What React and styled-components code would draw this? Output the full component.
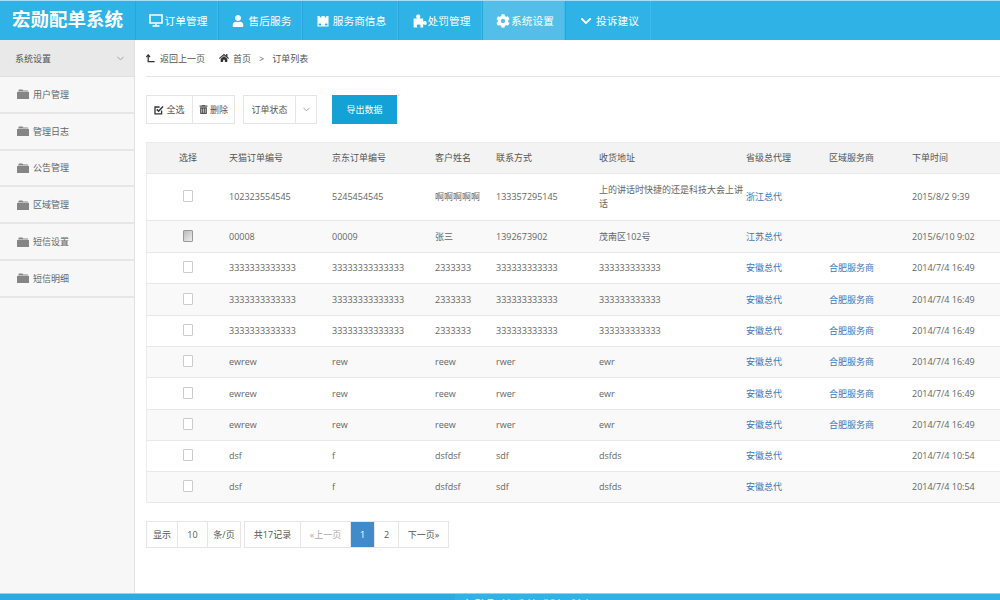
import React from 'react';
import styled, { createGlobalStyle } from 'styled-components';
import { FaUser, FaCog, FaChevronDown, FaHome, FaTrashAlt } from 'react-icons/fa';
import { FiChevronDown } from 'react-icons/fi';

const FONT = `"Open Sans", "Noto Sans CJK SC", sans-serif`;

const Global = createGlobalStyle`
  html, body { margin: 0; padding: 0; height: 100%; overflow: hidden; background: #fff; }
  body { font-family: ${FONT}; font-size: 9px; color: #666; }
  #root { height: 100%; }
  * { box-sizing: border-box; }
`;

const Page = styled.div`
  display: flex; flex-direction: column; height: 600px; overflow: hidden;
`;
const Header = styled.header`
  display: flex; height: 40px; flex: none; background: #2fb3e6; border-top: 1px solid #a9dff4;
`;
const Logo = styled.div`
  width: 135px; display: flex; align-items: center; justify-content: center;
  font-size: 18.5px; font-weight: 700; color: #fff; line-height: 1; padding-bottom: 2px;
`;
const Nav = styled.nav`display: flex;`;
const NavItem = styled.a`
  display: flex; align-items: center; justify-content: center;
  gap: ${p => p.$gap}px;
  padding-left: 3px;
  width: ${p => p.$w}px; font-size: 10.7px; color: #fff;
  border-left: 1px solid #29a5d8;
  border-right: 1px solid #3dbbea;
  background: ${p => (p.$active ? '#53bfe9' : 'transparent')};
  svg { flex: none; }
`;
const Body = styled.div`flex: 1; display: flex; min-height: 0;`;
const Sidebar = styled.aside`
  width: 135px; flex: none; background: #f7f7f7; border-right: 1px solid #e3e3e3;
`;
const SideHead = styled.div`
  height: 37px; background: #e9e9e9; display: flex; align-items: center; justify-content: space-between;
  padding: 0 8px 0 15px; font-size: 9px; color: #555; border-bottom: 1px solid #e0e0e0;
`;
const SideItem = styled.div`
  height: 36.8px; display: flex; align-items: center; gap: 4px; padding-left: 17px;
  font-size: 9px; color: #666; border-bottom: 2px solid #e6e6e6; background: #f7f7f7;
`;
const Main = styled.main`flex: 1; min-width: 0; padding-left: 11px;`;
const Crumbs = styled.div`
  height: 37px; border-bottom: 1px solid #e5e5e5; display: flex; align-items: center; font-size: 9px; color: #555;
`;
const Crumb = styled.span`
  display: inline-flex; align-items: center; gap: ${p => p.$gap || 0}px; margin-right: ${p => p.$mr || 0}px;
`;
const Sep = styled.span`margin: 0 8px; color: #666; font-size: 9px;`;
const Toolbar = styled.div`
  display: flex; align-items: stretch; height: 29px; margin-top: 18px;
`;
const BtnGroup = styled.div`
  display: flex; margin-right: ${p => p.$mr || 0}px; border: 1px solid #e5e5e5;
`;
const ToolBtn = styled.div`
  display: flex; align-items: center; justify-content: center; gap: 2px; width: ${p => p.$w}px;
  font-size: 9px; color: #555; background: #fff;
  & + & { border-left: 1px solid #e5e5e5; }
`;
const Export = styled.div`
  width: 65px; display: flex; align-items: center; justify-content: center;
  background: #13a1d6; color: #fff; font-size: 9px;
`;
const Table = styled.table`
  margin-top: 18px; width: 854px; table-layout: fixed; border-collapse: separate; border-spacing: 0;
  font-size: 9px; color: #666;
  border-top: 1px solid #ececec; border-left: 1px solid #ececec;
`;
const Th = styled.th`
  height: 31px; background: #f3f3f3; font-weight: 400; text-align: ${p => (p.$center ? 'center' : 'left')};
  padding: 0 0 1px; color: #555; border-bottom: 1px solid #e8e8e8;
`;
const Tr = styled.tr`background: ${p => (p.$alt ? '#f9f9f9' : '#fff')};`;
const Td = styled.td`
  height: ${p => p.$h}px; padding: 0; text-align: ${p => (p.$center ? 'center' : 'left')};
  border-bottom: 1px solid #e8e8e8; line-height: 14px; vertical-align: middle;
`;
const Check = styled.span`
  display: inline-block; width: 10px; height: 12px; vertical-align: middle; margin-bottom: 2px;
  border: 1px solid #ccc; border-radius: 1px;
  background: ${p => (p.$on ? 'linear-gradient(135deg,#bbb,#eee)' : '#fff')};
  border-color: ${p => (p.$on ? '#999' : '#ccc')};
`;
const Link = styled.a`color: #3d78bd;`;
const Pager = styled.div`display: flex; height: 27px; margin-top: 18px;`;
const PageGroup = styled.div`display: flex; border: 1px solid #e6e6e6; margin-right: ${p => p.$mr || 0}px;`;
const PageCell = styled.div`
  width: ${p => p.$w}px; display: flex; align-items: center; justify-content: center;
  font-size: 9px; color: ${p => (p.$active ? '#fff' : p.$muted ? '#aaa' : '#555')};
  background: ${p => (p.$active ? '#428bca' : '#fff')};
  & + & { border-left: 1px solid #e6e6e6; }
`;
const Footer = styled.footer`
  height: 7px; flex: none; display: flex; background: #2fb3e6; border-top: 1px solid #8ed4f0; overflow: hidden;
`;
const FootLeft = styled.div`width: 455px; flex: none; background: #2caae2;`;
const FootText = styled.div`color: #e8f6fc; font-size: 12px; line-height: 1; padding: 6px 0 0 6px; letter-spacing: 1px; white-space: nowrap;`;

const Folder = () => (
  <svg width="12" height="10" viewBox="0 0 12 10" fill="#858585">
    <path d="M1 2.4 2 .6h3.4l.8 1h4.6l.6.8z" />
    <path d="M0 3h12v7H0z" />
  </svg>
);
const Back = () => (
  <svg width="9" height="9" viewBox="0 0 9 9" fill="none" stroke="#333" strokeWidth="1.3">
    <path d="M2.2 1v6.6H8.6" />
    <path d="M.4 3 2.2 .9 4 3" />
  </svg>
);
const Castle = () => (
  <svg width="12" height="12" viewBox="0 0 12 12" fill="#fff">
    <path fillRule="evenodd" d="M.5 1h2.2v1.6h1.6V1h3.4v1.6h1.6V1h2.2v10.5H.5zM2.4 8.6a1 1 0 0 0 0 2h.8a1 1 0 0 0 0-2zM8.8 8.6a1 1 0 0 0 0 2h.8a1 1 0 0 0 0-2z" />
  </svg>
);
const Monitor = () => (
  <svg width="14" height="13" viewBox="0 0 14 13" fill="none" stroke="#fff">
    <path strokeWidth="1.6" d="M1 1h12v8H1z" />
    <path strokeWidth="1.4" d="M7 9.5v2M3.5 12h7" />
  </svg>
);
const Puzzle = () => (
  <svg width="14" height="14" viewBox="0 0 14 14" fill="#fff">
    <path d="M.6 4.4h3c.5-.7-.5-1.1-.5-2.2C3.1 1 4 .4 5.2.4s2.1.6 2.1 1.8c0 1.1-1 1.5-.5 2.2h3.4v3c.7.5 1.1-.5 2-.5.9 0 1.5.9 1.5 2s-.6 2-1.5 2c-.9 0-1.3-1-2-.5v3.2H7.2c-.5-.7.5-1 .5-1.8 0-.8-1-1.4-2.1-1.4s-2 .6-2 1.4c0 .8 1 1.1.5 1.8H.6z" />
  </svg>
);
const CheckEdit = () => (
  <svg width="10" height="10" viewBox="0 0 10 10" fill="none" stroke="#333">
    <path strokeWidth="1.3" d="M7.6 5.6v3.2H1V2h4.6" />
    <path strokeWidth="1.5" d="M2.8 4.4 4.6 6.2 9 1.4" />
  </svg>
);

const nav = [
  { t: '订单管理', w: 83, g: 2, i: <Monitor /> },
  { t: '售后服务', w: 84, g: 5, i: <FaUser size={12} /> },
  { t: '服务商信息', w: 96, g: 4, i: <Castle /> },
  { t: '处罚管理', w: 84, g: 1, i: <Puzzle /> },
  { t: '系统设置', w: 83, g: 1, i: <FaCog size={14} />, active: true },
  { t: '投诉建议', w: 86, g: 4, i: <FaChevronDown size={12} /> },
];
const side = ['用户管理', '管理日志', '公告管理', '区域管理', '短信设置', '短信明细'];
const widths = [82, 103, 103, 61, 103, 147, 83, 83, 88];
const heads = ['天猫订单编号', '京东订单编号', '客户姓名', '联系方式', '收货地址', '省级总代理', '区域服务商', '下单时间'];

const n3 = ['3333333333333', '33333333333333', '2333333', '333333333333', '333333333333', '安徽总代', '合肥服务商', '2014/7/4 16:49'];
const e = ['ewrew', 'rew', 'reew', 'rwer', 'ewr', '安徽总代', '合肥服务商', '2014/7/4 16:49'];
const d = ['dsf', 'f', 'dsfdsf', 'sdf', 'dsfds', '安徽总代', '', '2014/7/4 10:54'];
const rows = [
  { c: ['102323554545', '5245454545', '啊啊啊啊啊', '133357295145', '上的讲话时快捷的还是科技大会上讲话', '浙江总代', '', '2015/8/2 9:39'], h: 47 },
  { c: ['00008', '00009', '张三', '1392673902', '茂南区102号', '江苏总代', '', '2015/6/10 9:02'], h: 32, on: true, alt: true },
  { c: n3, h: 31 }, { c: n3, h: 32, alt: true }, { c: n3, h: 31 },
  { c: e, h: 31, alt: true }, { c: e, h: 32 }, { c: e, h: 31, alt: true },
  { c: d, h: 31 }, { c: d, h: 31, alt: true },
];

export default function App() {
  return (
    <Page>
      <Global />
      <Header>
        <Logo>宏勋配单系统</Logo>
        <Nav>
          {nav.map(n => (
            <NavItem key={n.t} $w={n.w} $gap={n.g} $active={n.active}>{n.i}{n.t}</NavItem>
          ))}
        </Nav>
      </Header>
      <Body>
        <Sidebar>
          <SideHead>系统设置<FiChevronDown size={11} color="#999" /></SideHead>
          {side.map(s => <SideItem key={s}><Folder />{s}</SideItem>)}
        </Sidebar>
        <Main>
          <Crumbs>
            <Crumb $gap={5} $mr={14}><Back />返回上一页</Crumb>
            <Crumb $gap={4}><FaHome size={10} color="#333" />首页</Crumb>
            <Sep>&gt;</Sep>
            <Crumb>订单列表</Crumb>
          </Crumbs>
          <Toolbar>
            <BtnGroup $mr={8}>
              <ToolBtn $w={45}><CheckEdit />全选</ToolBtn>
              <ToolBtn $w={42}><FaTrashAlt size={9} color="#555" />删除</ToolBtn>
            </BtnGroup>
            <BtnGroup $mr={15}>
              <ToolBtn $w={51}>订单状态</ToolBtn>
              <ToolBtn $w={21}><FiChevronDown size={11} color="#999" /></ToolBtn>
            </BtnGroup>
            <Export>导出数据</Export>
          </Toolbar>
          <Table>
            <colgroup>{widths.map((w, i) => <col key={i} style={{ width: w }} />)}</colgroup>
            <thead>
              <tr>
                <Th $center>选择</Th>
                {heads.map(h => <Th key={h}>{h}</Th>)}
              </tr>
            </thead>
            <tbody>
              {rows.map((r, i) => (
                <Tr key={i} $alt={r.alt}>
                  <Td $center $h={r.h}><Check $on={r.on} /></Td>
                  {r.c.map((c, j) => (
                    <Td key={j} $h={r.h}>{j === 5 || j === 6 ? <Link>{c}</Link> : c}</Td>
                  ))}
                </Tr>
              ))}
            </tbody>
          </Table>
          <Pager>
            <PageGroup $mr={3}>
              <PageCell $w={30}>显示</PageCell>
              <PageCell $w={30}>10</PageCell>
              <PageCell $w={33}>条/页</PageCell>
            </PageGroup>
            <PageGroup>
              <PageCell $w={55}>共17记录</PageCell>
              <PageCell $w={50} $muted>«上一页</PageCell>
              <PageCell $w={24} $active>1</PageCell>
              <PageCell $w={24}>2</PageCell>
              <PageCell $w={50}>下一页»</PageCell>
            </PageGroup>
          </Pager>
        </Main>
      </Body>
      <Footer>
        <FootLeft />
        <FootText>宏勋配单系统 版权所有</FootText>
      </Footer>
    </Page>
  );
}
